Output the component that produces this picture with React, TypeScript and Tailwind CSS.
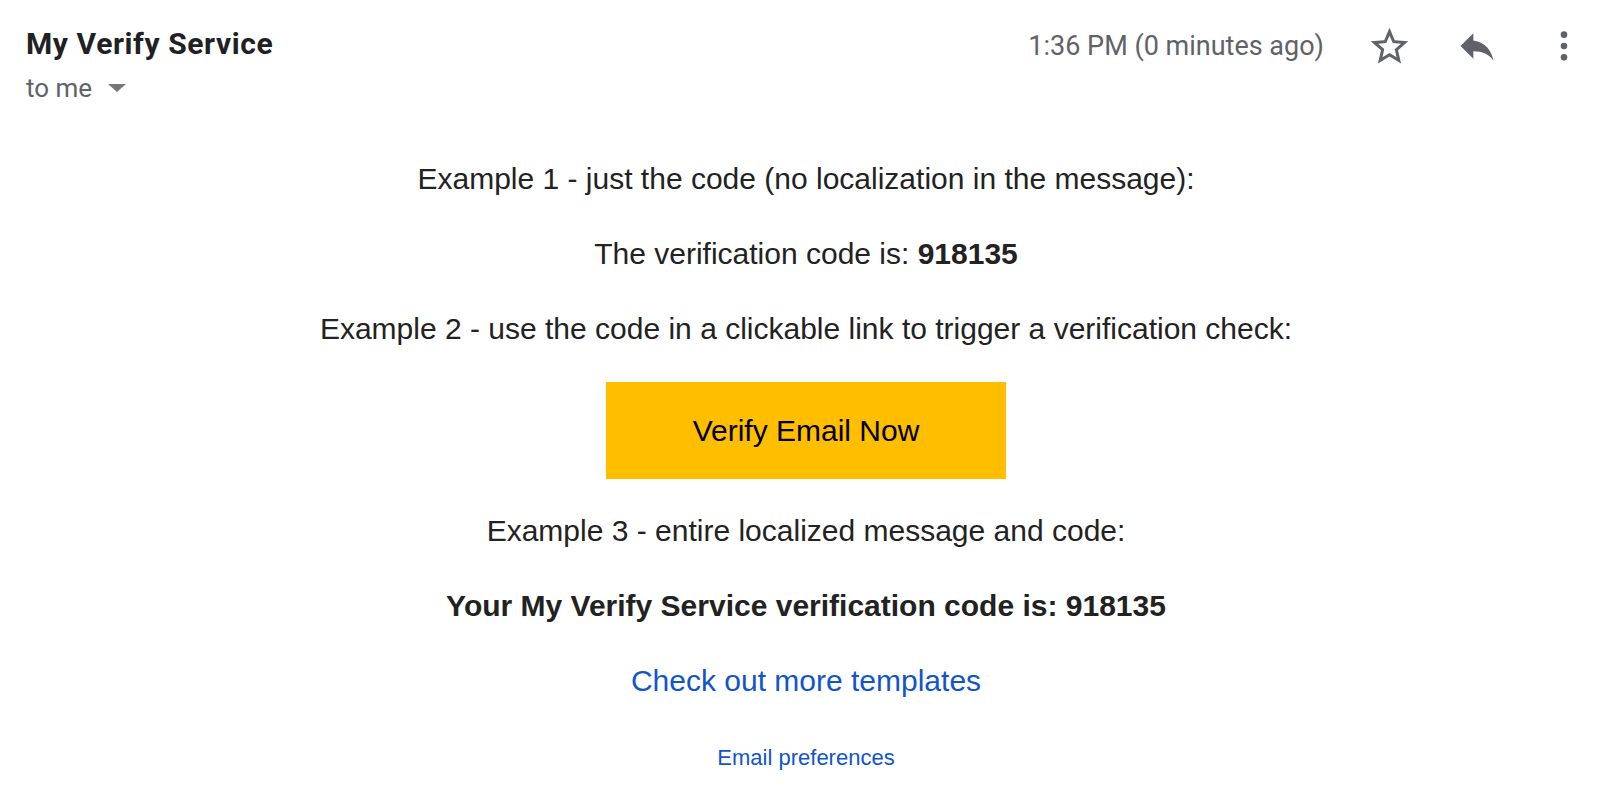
import React from 'react';

function StarIcon() {
  return (
    <svg viewBox="0 0 24 24" className="w-[45px] h-[45px]" fill="#5f6368">
      <path d="M22 9.24l-7.19-.62L12 2 9.19 8.63 2 9.24l5.46 4.73L5.82 21 12 17.27 18.18 21l-1.63-7.03L22 9.24zM12 15.4l-3.76 2.27 1-4.28-3.32-2.88 4.38-.38L12 6.1l1.71 4.04 4.38.38-3.32 2.88 1 4.28L12 15.4z" />
    </svg>
  );
}

function ReplyIcon() {
  return (
    <svg viewBox="0 0 24 24" className="w-[44px] h-[44px]" fill="#5f6368">
      <path d="M10 9V5l-7 7 7 7v-4.1c5 0 8.5 1.6 11 5.1-1-5-4-10-11-11z" />
    </svg>
  );
}

function MoreIcon() {
  return (
    <svg viewBox="0 0 24 24" className="w-[44px] h-[44px]" fill="#5f6368">
      <circle cx="12" cy="5.8" r="1.8" />
      <circle cx="12" cy="12" r="1.8" />
      <circle cx="12" cy="18.2" r="1.8" />
    </svg>
  );
}

export default function App() {
  return (
    <div className="w-[1600px] h-[805px] bg-white overflow-hidden">
      {/* header */}
      <div className="flex justify-between pl-[26px] pr-[14px] pt-[24px] font-['Roboto',sans-serif]">
        <div>
          <div className="text-[30px] font-bold leading-[40px] text-[#202124] tracking-[0.02em]">My Verify Service</div>
          <div className="mt-[8px] flex items-center gap-[16px] text-[26px] leading-[32px] text-[#5f6368]">
            <span>to me</span>
            <span className="w-0 h-0 border-l-[9px] border-r-[9px] border-t-[8px] border-l-transparent border-r-transparent border-t-[#777]" />
          </div>
        </div>
        <div className="flex items-start gap-[43px] h-[44px]">
          <span className="text-[27px] leading-[44px] text-[#5f6368]">1:36 PM (0 minutes ago)</span>
          <StarIcon />
          <ReplyIcon />
          <MoreIcon />
        </div>
      </div>

      {/* message body */}
      <div className="pl-3 pt-[37px] flex flex-col items-center text-center text-[30px] text-[#222] font-['Liberation_Sans',Arial,sans-serif]">
        <p className="leading-[75px]">Example 1 - just the code (no localization in the message):</p>
        <p className="leading-[75px]">
          The verification code is: <b>918135</b>
        </p>
        <p className="leading-[75px]">Example 2 - use the code in a clickable link to trigger a verification check:</p>
        <a className="mt-[16px] w-[400px] h-[97px] bg-[#FFBE00] text-black flex items-center justify-center">Verify Email Now</a>
        <p className="mt-[14px] leading-[75px]">Example 3 - entire localized message and code:</p>
        <p className="leading-[75px] font-bold">Your My Verify Service verification code is: 918135</p>
        <a className="leading-[75px] text-[#1155cc]">Check out more templates</a>
        <a className="mt-[2px] leading-[75px] text-[22px] text-[#1155cc]">Email preferences</a>
      </div>
    </div>
  );
}
